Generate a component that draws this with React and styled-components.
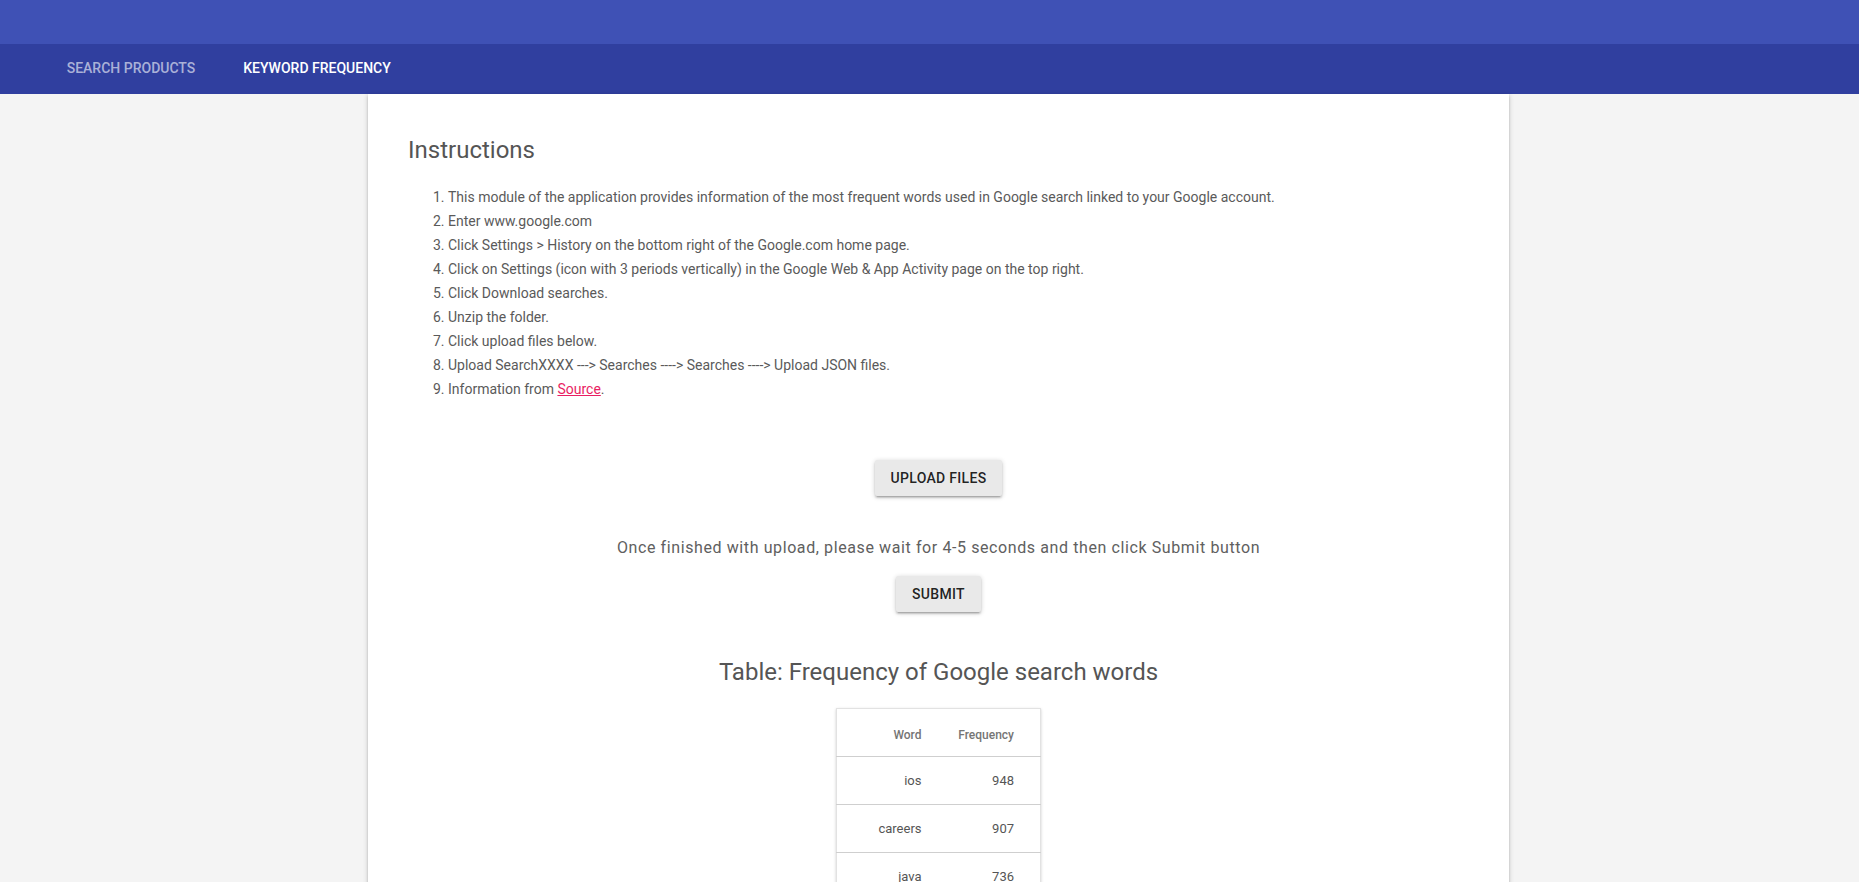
import React from "react";
import styled, { createGlobalStyle } from "styled-components";

const GlobalStyle = createGlobalStyle`
  html, body { margin: 0; padding: 0; }
  body {
    background: #f4f4f4;
    font-family: Roboto, "Liberation Sans", Arial, sans-serif;
    -webkit-font-smoothing: antialiased;
  }
  * { box-sizing: border-box; }
`;

const Page = styled.div`
  min-height: 100vh;
  display: flex;
  flex-direction: column;
`;

const TopBar = styled.header`
  height: 44px;
  background: #3f51b5;
`;

const TabBar = styled.nav`
  height: 50px;
  background: #303f9f;
  display: flex;
  align-items: stretch;
  padding-left: 38px;
`;

const Tab = styled.a`
  width: 186px;
  display: flex;
  align-items: center;
  justify-content: center;
  padding-bottom: 2px;
  font-size: 14px;
  font-weight: 500;
  letter-spacing: 0;
  text-transform: uppercase;
  text-decoration: none;
  color: ${(p) => (p.$active ? "#ffffff" : "rgba(255,255,255,0.6)")};
  cursor: pointer;
`;

const Main = styled.main`
  flex: 1;
  display: grid;
  grid-template-columns: 368px 1141px 1fr;
`;

const Paper = styled.section`
  grid-column: 2;
  background: #fff;
  padding: 40px 40px 40px 40px;
  box-shadow: 0 1px 5px rgba(0, 0, 0, 0.2), 0 2px 2px rgba(0, 0, 0, 0.14),
    0 3px 1px -2px rgba(0, 0, 0, 0.12);
  display: flex;
  flex-direction: column;
  color: #555;
`;

const Heading = styled.h2`
  margin: 0;
  font-size: 24px;
  font-weight: 400;
  line-height: 32px;
  color: #555;
  text-align: ${(p) => p.$align || "left"};
`;

const Steps = styled.ol`
  margin: 19px 0 0 0;
  padding-left: 40px;
  font-size: 14px;
  line-height: 24px;
  color: #5a5a5a;
`;

const Link = styled.a`
  color: #e91e63;
  text-decoration: underline;
`;

const Center = styled.div`
  display: flex;
  flex-direction: column;
  align-items: center;
  margin-top: ${(p) => p.$mt || 0}px;
`;

const Button = styled.button`
  height: 36px;
  min-width: 64px;
  padding: 0 16px;
  border: none;
  border-radius: 2px;
  background: #e9e9e9;
  color: rgba(0, 0, 0, 0.87);
  font-family: Roboto, "Liberation Sans", Arial, sans-serif;
  font-size: 14px;
  font-weight: 500;
  letter-spacing: 0.3px;
  text-transform: uppercase;
  cursor: pointer;
  box-shadow: 0 1px 5px rgba(0, 0, 0, 0.2), 0 2px 2px rgba(0, 0, 0, 0.14),
    0 3px 1px -2px rgba(0, 0, 0, 0.12);
`;

const Note = styled.p`
  margin: 40px 0 16px 0;
  font-size: 16px;
  line-height: 24px;
  letter-spacing: 0.6px;
  color: #606060;
`;

const TableTitle = styled(Heading)`
  margin-top: 44px;
`;

const Table = styled.table`
  margin-top: 20px;
  width: 204px;
  table-layout: fixed;
  border-collapse: collapse;
  border: 1px solid #e2e2e2;
  box-shadow: 0 1px 3px rgba(0, 0, 0, 0.16), 0 1px 1px rgba(0, 0, 0, 0.08);
  background: #fff;
`;

const Row = styled.tr`
  height: 48px;
  border-bottom: 1px solid #cfcfcf;
`;

const HeadCell = styled.th`
  font-size: 12px;
  font-weight: 500;
  color: #757575;
  text-align: right;
  padding: 4px ${(p) => p.$pr}px 0 0;
  width: ${(p) => p.$w}px;
`;

const Cell = styled.td`
  font-size: 13px;
  color: #555;
  text-align: right;
  padding: 0 ${(p) => p.$pr}px 0 0;
`;

const steps = [
  "This module of the application provides information of the most frequent words used in Google search linked to your Google account.",
  "Enter www.google.com",
  "Click Settings > History on the bottom right of the Google.com home page.",
  "Click on Settings (icon with 3 periods vertically) in the Google Web & App Activity page on the top right.",
  "Click Download searches.",
  "Unzip the folder.",
  "Click upload files below.",
  "Upload SearchXXXX ---> Searches ----> Searches ----> Upload JSON files.",
];

const rows = [
  ["ios", 948],
  ["careers", 907],
  ["java", 736],
  ["swift", 612],
  ["react", 540],
];

export default function App() {
  return (
    <>
      <GlobalStyle />
      <Page>
        <TopBar />
        <TabBar>
          <Tab>Search Products</Tab>
          <Tab $active>Keyword Frequency</Tab>
        </TabBar>
        <Main>
          <Paper>
            <Heading>Instructions</Heading>
            <Steps>
              {steps.map((s) => (
                <li key={s}>{s}</li>
              ))}
              <li>
                Information from <Link href="#">Source</Link>.
              </li>
            </Steps>
            <Center $mt={59}>
              <Button>Upload Files</Button>
              <Note>
                Once finished with upload, please wait for 4-5 seconds and then
                click Submit button
              </Note>
              <Button>Submit</Button>
              <TableTitle $align="center">
                Table: Frequency of Google search words
              </TableTitle>
              <Table>
                <thead>
                  <Row>
                    <HeadCell $w={103} $pr={18}>Word</HeadCell>
                    <HeadCell $w={101} $pr={26}>Frequency</HeadCell>
                  </Row>
                </thead>
                <tbody>
                  {rows.map(([w, f]) => (
                    <Row key={w}>
                      <Cell $pr={18}>{w}</Cell>
                      <Cell $pr={26}>{f}</Cell>
                    </Row>
                  ))}
                </tbody>
              </Table>
            </Center>
          </Paper>
        </Main>
      </Page>
    </>
  );
}
